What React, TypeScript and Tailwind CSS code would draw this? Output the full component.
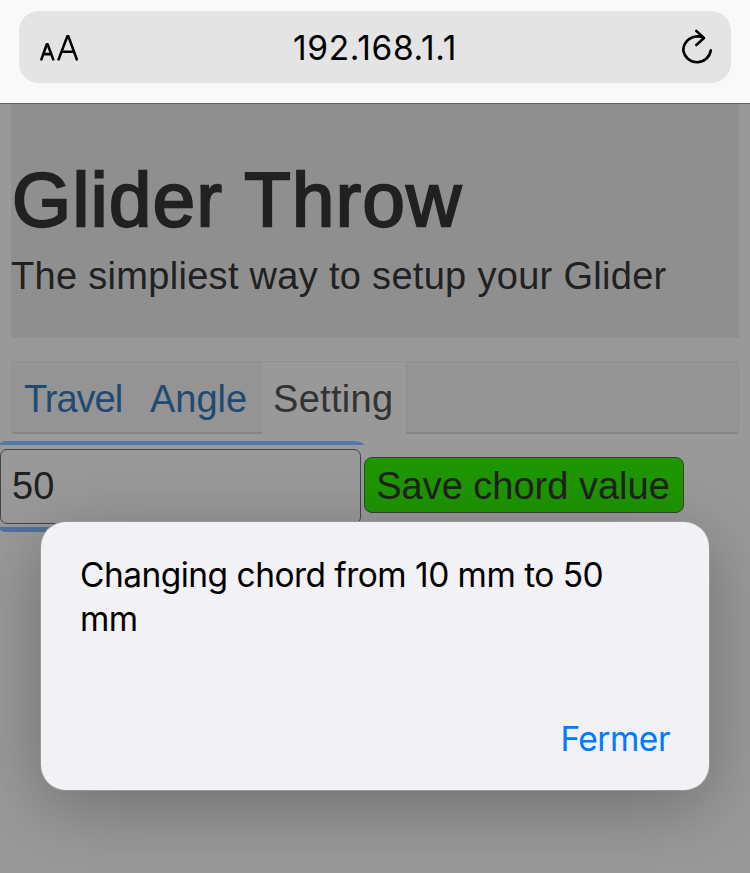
export default function App() {
  return (
    <div className="relative h-[873px] w-[750px] overflow-hidden bg-[#999999] font-['Liberation_Sans',Arial,sans-serif] text-[#212121]">
      <header className="h-[104px] border-b border-[#636363] bg-[#f9f9f9] px-[19px] pt-[11px]">
        <div className="grid h-[72px] grid-cols-[60px_1fr_60px] items-center rounded-[20px] bg-[#e4e4e4] text-black">
          <svg className="ml-[21px]" width="39" height="40" viewBox="0 0 39 40" fill="none" stroke="black" strokeLinecap="round" strokeLinejoin="round">
            <path d="M1.4 32.4 6.8 17.2H7.6L13.2 32.4M3.4 27.1H11.3" strokeWidth="2.6" />
            <path d="M18.6 32.4 27.3 9.4H28.4L36.8 32.4M21.8 24.7H33.8" strokeWidth="2.6" />
          </svg>
          <div className="pt-[2px] text-center font-[Inter,sans-serif] text-[33.5px] leading-[40px] tracking-[0.65px]">192.168.1.1</div>
          <svg className="mr-[18px] justify-self-end" width="32" height="40" viewBox="0 0 32 40" fill="none" stroke="black" strokeWidth="2.6" strokeLinecap="round" strokeLinejoin="round">
            <path d="M22 10.2C11.2 7 2.3 14 2.3 23.5A13.9 13.9 0 0 0 29.8 23.2M15.3 3.9 23 11 15.3 18" />
          </svg>
        </div>
      </header>
      <main>
        <section className="mr-[11px] ml-[11px] h-[234px] bg-[#8f8f8f] pt-[54px]">
          <h1 className="h-[84px] pl-[1px] text-[76px] leading-[84px] tracking-[1.4px] whitespace-nowrap [-webkit-text-stroke:2.3px_#212121]">Glider Throw</h1>
          <p className="pt-[12px] text-[38px] leading-[44px] tracking-[0.3px] whitespace-nowrap">The simpliest way to setup your Glider</p>
        </section>
        <nav className="mt-[23px] mr-[11px] ml-[11px] flex h-[73px] rounded-[4px] border border-b-2 border-[#909090] border-b-[#858585] bg-[#949494] text-[38px] leading-[44px]">
          <div className="w-[125px] pt-[15px] pl-[12px] tracking-[-1px] text-[#204a73]">Travel</div>
          <div className="w-[125px] pt-[15px] pl-[13px] text-[#204a73]">Angle</div>
          <div className="-mb-[2px] w-[145px] rounded-t-[2px] border-r border-[#8b8b8b] bg-[#999999] pt-[15px] pl-[11px] tracking-[0.3px] text-[#333333]">Setting</div>
        </nav>
        <form className="relative mt-[15px] flex items-start gap-[3px] text-[38px] leading-[44px]">
          <div className="absolute -top-[8px] left-0 h-[4px] w-[364px] rounded-[6px_12px_0_0/3px_4px_0_0] bg-[#5179ab]" />
          <div className="absolute top-[78px] left-0 h-[5px] w-[364px] rounded-[0_0_12px_6px/0_0_4px_3px] bg-[#4e739f]" />
          <div className="h-[75px] w-[361px] rounded-[7px] border border-[#444444] pt-[14px] pl-[11px]">50</div>
          <button type="button" className="mt-[8px] h-[56px] w-[320px] rounded-[8px] border border-[#344431] bg-[#1e9600] pt-[2px] pr-[2px] whitespace-nowrap">Save chord value</button>
        </form>
      </main>
      <div role="dialog" className="absolute top-[522px] left-[41px] flex h-[268px] w-[668px] flex-col justify-between rounded-[25px] bg-[#f2f1f6] px-[39px] pt-[31px] pb-[29px] font-[Inter,sans-serif] text-[33.5px] leading-[44px] text-black shadow-[0_0_0_1px_#98989a,0_16px_70px_rgba(0,0,0,0.28)]">
        <p className="tracking-[-0.53px]">Changing chord from 10 mm to 50<br />mm</p>
        <button type="button" className="self-end tracking-[-0.5px] text-[#007aff]">Fermer</button>
      </div>
    </div>
  );
}
